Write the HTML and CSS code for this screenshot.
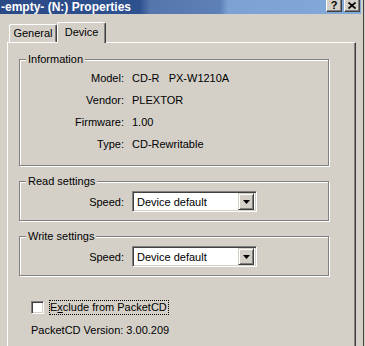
FILE: index.html
```html
<!DOCTYPE html>
<html lang="en">
<head>
  <meta charset="UTF-8">
  <title>-empty- (N:) Properties</title>
  <link rel="stylesheet" href="styles.css">
</head>
<body>
  <div class="window">
    <div class="titlebar">
      <span class="title">-empty- (N:) Properties</span>
      <div class="caption">
        <span class="cbtn">?</span>
        <span class="cbtn">
          <svg width="8" height="7" viewBox="0 0 8 7"><path d="M0.5 0.5 L7.5 6.5 M7.5 0.5 L0.5 6.5" stroke="#000" stroke-width="1.7" fill="none"/></svg>
        </span>
      </div>
    </div>
    <div class="dialog">
      <div class="tabs">
        <div class="tab">General</div>
        <div class="tab active">Device</div>
      </div>
      <div class="panel">
        <fieldset class="group">
          <legend>Information</legend>
          <div class="props">
            <span class="k">Model:</span><span class="v">CD-R   PX-W1210A</span>
            <span class="k">Vendor:</span><span class="v">PLEXTOR</span>
            <span class="k">Firmware:</span><span class="v">1.00</span>
            <span class="k">Type:</span><span class="v">CD-Rewritable</span>
          </div>
        </fieldset>
        <fieldset class="group">
          <legend>Read settings</legend>
          <div class="field">
            <span class="k">Speed:</span>
            <div class="combo"><span class="combo-text">Device default</span><span class="arrow"><svg width="7" height="4" viewBox="0 0 7 4"><path d="M0 0 H7 L3.5 4 Z" fill="#000"/></svg></span></div>
          </div>
        </fieldset>
        <fieldset class="group">
          <legend>Write settings</legend>
          <div class="field">
            <span class="k">Speed:</span>
            <div class="combo"><span class="combo-text">Device default</span><span class="arrow"><svg width="7" height="4" viewBox="0 0 7 4"><path d="M0 0 H7 L3.5 4 Z" fill="#000"/></svg></span></div>
          </div>
        </fieldset>
        <label class="check"><span class="box"></span><span class="focus">E<u>x</u>clude from PacketCD</span></label>
        <div class="version">PacketCD Version: 3.00.209</div>
      </div>
    </div>
  </div>
</body>
</html>
```

FILE: styles.css
```css
body { margin: 0; background: #d4d0c8; font: 11px "Liberation Sans", Arial, sans-serif; color: #000; }
.window { width: 363px; height: 346px; border-right: 1px solid #404040; overflow: hidden; }

.titlebar { display: flex; height: 14px; margin-right: 2px; padding-right: 1px;
  background: linear-gradient(to right, #2a4a86 0, #2e5190 140px, #5476ad 150px, #5d80b6 220px, #7ca2d4 228px, #82a9da 100%); }
.title { color: #fff; font-weight: bold; font-size: 12px; line-height: 14px; padding-left: 1px; white-space: nowrap; }
.caption { margin-left: auto; display: flex; gap: 2px; }
.cbtn { box-sizing: border-box; width: 16px; height: 14px; margin-top: -2px; background: #d4d0c8;
  border: 1px solid; border-color: #fff #404040 #404040 #fff; box-shadow: inset -1px -1px #808080;
  display: flex; align-items: center; justify-content: center; font-weight: bold; font-size: 11px; line-height: 11px; }

.dialog { padding: 8px 0 0 7px; }
.tabs { display: flex; align-items: flex-end; height: 20px; padding-left: 2px; }
.tab { box-sizing: border-box; width: 48px; height: 18px; line-height: 17px; text-align: center; background: #d4d0c8;
  border: 1px solid; border-bottom: 0; border-color: #fff #404040 #404040 #fff; border-radius: 2px 2px 0 0;
  box-shadow: inset -1px 0 #808080; }
.tab.active { width: 49px; height: 21px; line-height: 18px; margin-bottom: -1px; position: relative; z-index: 1; }

.panel { box-sizing: border-box; width: 349px; height: 310px; padding-left: 11px;
  border: 1px solid; border-color: #fff #404040 #404040 #fff; box-shadow: inset -1px -1px #808080; }

.group { box-sizing: border-box; width: 310px; margin: 10px 0 0; padding: 0; min-width: 0;
  border: 1px solid #808080; box-shadow: inset 1px 1px #fff, 1px 1px #fff; }
.group + .group { margin-top: 9px; }
.group legend { margin-left: 6px; padding: 0 2px; line-height: 13px; background: #d4d0c8; }

.props { display: grid; grid-template-columns: 104px auto; column-gap: 8px; line-height: 22px; padding: 1px 0 10px; }
.k { text-align: right; }
.v { white-space: pre; }

.field { display: grid; grid-template-columns: 104px auto; column-gap: 8px; align-items: center; padding: 3px 0 8px; }
.combo { box-sizing: border-box; width: 125px; height: 21px; display: flex; align-items: center; padding: 2px; background: #fff;
  border: 1px solid; border-color: #808080 #fff #fff #808080; box-shadow: inset 1px 1px #404040, inset -1px -1px #d4d0c8; }
.combo-text { padding-left: 2px; }
.arrow { box-sizing: border-box; margin-left: auto; width: 16px; height: 17px; background: #d4d0c8;
  border: 1px solid; border-color: #d4d0c8 #404040 #404040 #d4d0c8; box-shadow: inset 1px 1px #fff, inset -1px -1px #808080;
  display: flex; align-items: center; justify-content: center; }

.check { display: flex; align-items: center; height: 15px; margin: 24px 0 0 12px; }
.box { box-sizing: border-box; width: 13px; height: 13px; margin-right: 5px; background: #fff;
  border: 1px solid; border-color: #808080 #fff #fff #808080; box-shadow: inset 1px 1px #404040, inset -1px -1px #d4d0c8; }
.focus { border: 1px dotted #000; line-height: 13px; padding: 0 1px 0 0; }
.version { margin: 9px 0 0 12px; line-height: 13px; }
```
